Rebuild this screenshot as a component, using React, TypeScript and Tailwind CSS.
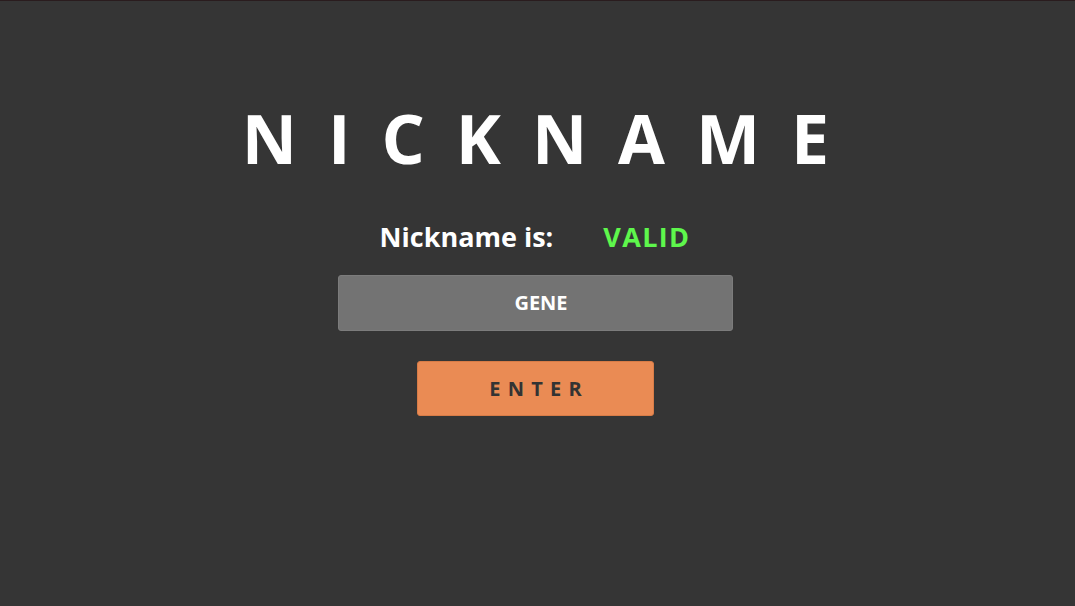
export default function App() {
  return (
    <div
      className="w-[1075px] h-[606px] bg-[#353535] border-t border-t-[#2a1c1e] flex flex-col items-center overflow-hidden"
      style={{ fontFamily: '"Open Sans", "Noto Sans", sans-serif' }}
    >
      <h1 className="mt-[89px] ml-[-4px] h-[96px] flex items-center text-white font-bold text-[68px] leading-none tracking-[0.455em] pl-[0.455em]">
        NICKNAME
      </h1>
      <div className="mt-[34px] ml-[-5px] flex items-center h-[32px] text-[27px] font-bold leading-none">
        <span className="text-white">Nickname is:</span>
        <span className="ml-[50px] text-[#5ef74c] tracking-[0.05em]">VALID</span>
      </div>
      <div className="mt-[23px] ml-[-4px] w-[395px] h-[56px] rounded-[3px] bg-[#737373] border border-[#7c7c7c] flex items-center justify-center text-white font-bold text-[20px]">
        <span className="ml-[11px]">GENE</span>
      </div>
      <button className="mt-[30px] ml-[-4px] w-[237px] h-[55px] rounded-[3px] bg-[#ea8b54] border border-[#d87c47] flex items-center justify-center text-[#333333] font-bold text-[20px] tracking-[0.36em] pl-[0.36em]">
        ENTER
      </button>
    </div>
  );
}
